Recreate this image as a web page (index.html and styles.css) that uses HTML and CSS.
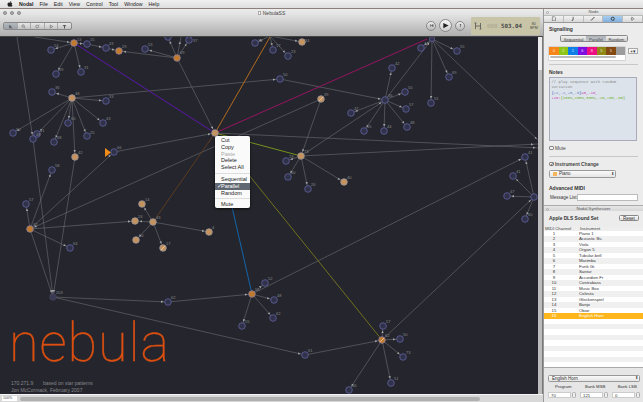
FILE: index.html
```html
<!DOCTYPE html>
<html lang="en">
<head>
<meta charset="utf-8">
<title>NebulaSS</title>
<link rel="stylesheet" href="styles.css">
</head>
<body>
<header class="menubar">
  <svg class="apple" viewBox="0 0 10 10"><path d="M5 3C6 2.2 8 2.2 8.8 3.6 7.4 4.6 7.6 6.6 9.2 7.2 8.6 8.800 7.600 9.800 6.800 9.600 6 9.400 5.600 9.200 5 9.200S3.800 9.600 3.200 9.600C2 9.600.6 7 .8 5.200 1 3 3.400 2.200 5 3ZM5 2.600C5 1.400 5.800.4 7 .2 7.200 1.400 6.200 2.600 5 2.600Z"/></svg>
  <b>Nodal</b><span>File</span><span>Edit</span><span>View</span><span>Control</span><span>Tool</span><span>Window</span><span>Help</span>
</header>
<div class="desk">
  <main class="window">
    <div class="toolbar">
      <div class="titlerow">
        <div class="lights"><i></i><i></i><i></i></div>
        <div class="doctitle"><i class="docicon"></i>NebulaSS</div>
      </div>
      <div class="toolrow">
        <div class="tools">
          <div class="tool on"><svg viewBox="0 0 8 8"><path d="M2 1v6l1.600-1.500L5 7.500l1-.5-1.200-2H6.800Z"/></svg></div>
          <div class="tool"><svg viewBox="0 0 8 8"><circle cx="3.400" cy="3.200" r="2" class="ol"/><path d="M5 5l2 2" class="ol"/></svg></div>
          <div class="tool"><svg viewBox="0 0 8 8"><circle cx="3.500" cy="4" r="2.300" class="ol"/><path d="M5.500 2.500l1.500-1.500" class="ol"/></svg></div>
          <div class="tool"><svg viewBox="0 0 8 8"><path d="M2 1.500L6 4 2 6.500Z" class="ol"/></svg></div>
          <div class="tool"><svg viewBox="0 0 8 8"><path d="M1 1.500h6L4.800 4v3H3.200V4Z"/></svg></div>
        </div>
        <div class="transport">
          <div class="tbtn"><svg viewBox="0 0 8 8"><path d="M1.500 1.500h1v5h-1ZM7 1.500v5L3 4Z"/></svg></div>
          <div class="tbtn play"><svg viewBox="0 0 8 8"><path d="M1.500 1v6L7.500 4Z"/></svg></div>
          <div class="tbtn"><svg viewBox="0 0 8 8"><path d="M2.500 1.500h3L4.500 3v3.500h-1V3Z"/></svg></div>
        </div>
        <div class="display">
          <svg class="dispicon" viewBox="0 0 8 8"><path d="M1.500 1v6M6.500 1v6M1.500 4h5M.5 1h2M5.500 7h2" class="ol"/></svg>
          <div class="time"><span class="dim">000.</span>503.04</div>
          <div class="bpm">80<br>BPM</div>
        </div>
      </div>
    </div>
    <div class="stage">
      <svg class="canvas" viewBox="0 37 538 357" width="538" height="357">
        <defs>
          <marker id="ag" viewBox="0 0 8 4" refX="7" refY="2" markerWidth="8" markerHeight="4" markerUnits="userSpaceOnUse" orient="auto"><path d="M0 .8L2.500 2 0 3.200Z" class="mg"/></marker>
        </defs>
        <g class="edges">
          <line x1="35" y1="37" x2="74" y2="43"/><line x1="74" y1="43" x2="87" y2="44"/><line x1="74" y1="43" x2="51" y2="50"/><line x1="74" y1="43" x2="56" y2="74"/><line x1="74" y1="43" x2="81" y2="72"/>
          <line x1="87" y1="44" x2="106" y2="48"/><line x1="106" y1="48" x2="119" y2="51"/><line x1="177" y1="58" x2="119" y2="51"/><line x1="177" y1="58" x2="145" y2="49"/><line x1="177" y1="58" x2="189" y2="40"/><line x1="177" y1="58" x2="168" y2="37"/><line x1="177" y1="58" x2="181" y2="37"/><line x1="177" y1="58" x2="215" y2="133"/>
          <line x1="72" y1="98" x2="52" y2="92"/><line x1="72" y1="98" x2="106" y2="101"/><line x1="72" y1="98" x2="68" y2="123"/><line x1="72" y1="98" x2="103" y2="123"/><line x1="72" y1="98" x2="13" y2="133"/><line x1="72" y1="98" x2="37" y2="134"/><line x1="72" y1="98" x2="87" y2="136"/><line x1="72" y1="98" x2="54" y2="142"/><line x1="72" y1="98" x2="75" y2="157"/><line x1="72" y1="98" x2="280" y2="79"/>
          <line x1="280" y1="79" x2="385" y2="100"/><line x1="385" y1="100" x2="392" y2="68"/><line x1="385" y1="100" x2="405" y2="92"/><line x1="385" y1="100" x2="406" y2="109"/><line x1="385" y1="100" x2="407" y2="127"/><line x1="385" y1="100" x2="351" y2="113"/><line x1="385" y1="100" x2="384" y2="131"/><line x1="385" y1="100" x2="364" y2="131"/><line x1="385" y1="100" x2="432" y2="39"/>
          <line x1="321" y1="99" x2="30" y2="229"/><line x1="321" y1="99" x2="301" y2="156"/><line x1="114" y1="152" x2="215" y2="133"/>
          <line x1="30" y1="229" x2="114" y2="152"/><line x1="30" y1="229" x2="26" y2="204"/><line x1="30" y1="229" x2="52" y2="170"/><line x1="30" y1="229" x2="70" y2="248"/><line x1="30" y1="229" x2="135" y2="221"/><line x1="30" y1="229" x2="53" y2="297"/>
          <line x1="17" y1="37" x2="33" y2="139"/><line x1="33" y1="139" x2="53" y2="297"/><line x1="75" y1="157" x2="53" y2="297"/>
          <line x1="53" y1="297" x2="168" y2="302"/><line x1="53" y1="297" x2="305" y2="355"/><line x1="168" y1="302" x2="252" y2="294"/>
          <line x1="252" y1="294" x2="265" y2="283"/><line x1="252" y1="294" x2="274" y2="300"/><line x1="252" y1="294" x2="273" y2="318"/><line x1="252" y1="294" x2="242" y2="326"/><line x1="252" y1="294" x2="525" y2="157"/>
          <line x1="305" y1="355" x2="382" y2="340"/><line x1="382" y1="340" x2="383" y2="326"/><line x1="382" y1="340" x2="400" y2="339"/><line x1="382" y1="340" x2="403" y2="357"/><line x1="382" y1="340" x2="391" y2="383"/><line x1="382" y1="340" x2="349" y2="390"/><line x1="382" y1="340" x2="534" y2="197"/>
          <line x1="534" y1="197" x2="525" y2="157"/><line x1="534" y1="197" x2="513" y2="176"/><line x1="534" y1="197" x2="507" y2="196"/><line x1="534" y1="197" x2="525" y2="219"/>
          <line x1="432" y1="39" x2="540" y2="142"/><line x1="432" y1="39" x2="457" y2="51"/><line x1="432" y1="39" x2="449" y2="77"/><line x1="432" y1="39" x2="431" y2="103"/><line x1="432" y1="39" x2="421" y2="48"/>
          <line x1="301" y1="156" x2="286" y2="161"/><line x1="301" y1="156" x2="288" y2="177"/><line x1="301" y1="156" x2="308" y2="189"/><line x1="301" y1="156" x2="344" y2="182"/><line x1="301" y1="156" x2="538" y2="144"/><line x1="301" y1="156" x2="385" y2="100"/>
          <line x1="215" y1="133" x2="540" y2="148"/>
          <line x1="153" y1="222" x2="135" y2="221"/><line x1="153" y1="222" x2="142" y2="204"/><line x1="153" y1="222" x2="136" y2="240"/><line x1="153" y1="222" x2="163" y2="248"/><line x1="153" y1="222" x2="209" y2="232"/>
          <line x1="270" y1="36" x2="255" y2="43"/><line x1="270" y1="36" x2="273" y2="50"/><line x1="270" y1="36" x2="288" y2="56"/><line x1="270" y1="36" x2="302" y2="42"/>
        </g>
        <line class="sig purple" x1="215" y1="133" x2="74" y2="43"/>
        <line class="sig magenta" x1="215" y1="133" x2="427" y2="39"/>
        <line class="sig amber" x1="215" y1="133" x2="270" y2="37"/>
        <line class="sig brown" x1="215" y1="133" x2="153" y2="222"/>
        <line class="sig green" x1="215" y1="133" x2="301" y2="156"/>
        <line class="sig blue" x1="215" y1="133" x2="252" y2="294"/>
        <line class="sig olive" x1="215" y1="133" x2="382" y2="340"/>
        <g class="nodes">
          <circle cx="87" cy="44" r="3.300"/><circle cx="51" cy="50" r="3.300"/><circle cx="106" cy="48" r="3.300"/><circle cx="145" cy="49" r="3.300"/><circle cx="189" cy="40" r="3.300"/><circle cx="168" cy="37" r="3.300"/><circle cx="56" cy="74" r="3.300"/><circle cx="81" cy="72" r="3.300"/><circle cx="52" cy="92" r="3.300"/><circle cx="106" cy="101" r="3.300"/><circle cx="68" cy="123" r="3.300"/><circle cx="103" cy="123" r="3.300"/><circle cx="13" cy="133" r="3.300"/><circle cx="37" cy="134" r="3.300"/><circle cx="87" cy="136" r="3.300"/><circle cx="33" cy="139" r="3.300"/><circle cx="54" cy="142" r="3.300"/><circle cx="114" cy="152" r="3.300"/><circle cx="52" cy="170" r="3.300"/><circle cx="26" cy="204" r="3.300"/><circle cx="70" cy="248" r="3.300"/><circle cx="255" cy="43" r="3.300"/><circle cx="273" cy="50" r="3.300"/><circle cx="288" cy="56" r="3.300"/><circle cx="280" cy="79" r="3.300"/><circle cx="392" cy="68" r="3.300"/><circle cx="405" cy="92" r="3.300"/><circle cx="406" cy="109" r="3.300"/><circle cx="407" cy="127" r="3.300"/><circle cx="351" cy="113" r="3.300"/><circle cx="364" cy="131" r="3.300"/><circle cx="384" cy="131" r="3.300"/><circle cx="421" cy="48" r="3.300"/><circle cx="457" cy="51" r="3.300"/><circle cx="449" cy="77" r="3.300"/><circle cx="431" cy="103" r="3.300"/><circle cx="525" cy="157" r="3.300"/><circle cx="513" cy="176" r="3.300"/><circle cx="507" cy="196" r="3.300"/><circle cx="525" cy="219" r="3.300"/><circle cx="286" cy="161" r="3.300"/><circle cx="288" cy="177" r="3.300"/><circle cx="308" cy="189" r="3.300"/><circle cx="168" cy="302" r="3.300"/><circle cx="265" cy="283" r="3.300"/><circle cx="274" cy="300" r="3.300"/><circle cx="273" cy="318" r="3.300"/><circle cx="242" cy="326" r="3.300"/><circle cx="305" cy="355" r="3.300"/><circle cx="383" cy="326" r="3.300"/><circle cx="400" cy="339" r="3.300"/><circle cx="403" cy="357" r="3.300"/><circle cx="391" cy="383" r="3.300"/><circle cx="349" cy="390" r="3.300"/><circle cx="385" cy="100" r="3.300"/><circle cx="534" cy="197" r="3.300"/><circle cx="432" cy="39" r="2.500"/>
          <circle class="dark" cx="53" cy="297" r="3.300"/>
        </g>
        <g class="nodes orange">
          <circle cx="74" cy="43" r="3.300"/><circle cx="177" cy="58" r="3.300"/><circle cx="30" cy="229" r="3.300"/><circle cx="252" cy="294" r="3.300"/><circle cx="382" cy="340" r="3.300"/><circle cx="119" cy="51" r="3.300"/>
        </g>
        <g class="nodes light">
          <circle cx="72" cy="98" r="3.300"/><circle cx="75" cy="157" r="3.300"/><circle cx="142" cy="204" r="3.300"/><circle cx="135" cy="221" r="3.300"/><circle cx="153" cy="222" r="3.300"/><circle cx="136" cy="240" r="3.300"/><circle cx="163" cy="248" r="3.300"/><circle cx="209" cy="232" r="3.300"/><circle cx="301" cy="156" r="3.300"/><circle cx="344" cy="182" r="3.300"/><circle cx="302" cy="42" r="3.300"/><circle cx="321" cy="99" r="3.300"/><circle cx="215" cy="133" r="3.300"/>
        </g>
        <path class="stripe" d="M161 250l4-4M380 342l4-4M319 101l4-4"/>
        <polygon class="cursor" points="105,148 111,152.500 105,157"/>
        <g class="labels">
          <text x="77" y="41">13</text><text x="90" y="41">15</text><text x="54" y="47">54</text><text x="109" y="45">43</text><text x="122" y="48">29</text><text x="148" y="46">53</text><text x="180" y="54">69</text><text x="193" y="42">37</text><text x="59" y="71">69</text><text x="84" y="69">31</text><text x="55" y="89">36</text><text x="75" y="95">48</text><text x="109" y="98">33</text><text x="71" y="120">60</text><text x="106" y="120">43</text><text x="16" y="131">50</text><text x="40" y="132">41</text><text x="90" y="134">25</text><text x="36" y="136">48</text><text x="57" y="139">68</text><text x="78" y="154">42</text><text x="117" y="149">66</text><text x="55" y="167">58</text><text x="29" y="201">57</text><text x="33" y="226">42</text><text x="73" y="245">64</text><text x="145" y="201">14</text><text x="138" y="218">24</text><text x="156" y="219">43</text><text x="139" y="237">60</text><text x="166" y="245">17</text><text x="212" y="229">4</text>
          <text x="258" y="42">18</text><text x="276" y="47">17</text><text x="291" y="53">23</text><text x="305" y="41.500">34</text><text x="283" y="76">50</text><text x="324" y="96">39</text><text x="395" y="65">42</text><text x="388" y="97">46</text><text x="408" y="89">50</text><text x="409" y="106">57</text><text x="410" y="124">48</text><text x="354" y="110">47</text><text x="367" y="128">55</text><text x="387" y="128">44</text><text x="424" y="45">47</text><text x="460" y="48">55</text><text x="452" y="74">69</text><text x="434" y="100">55</text>
          <text x="528" y="154">41</text><text x="516" y="173">41</text><text x="510" y="193">47</text><text x="528" y="216">60</text><text x="289" y="158">23</text><text x="291" y="174">60</text><text x="304" y="153">73</text><text x="311" y="186">26</text><text x="347" y="179">40</text>
          <text x="56" y="294">203</text><text x="171" y="299">62</text><text x="255" y="291">56</text><text x="268" y="280">52</text><text x="277" y="297">48</text><text x="276" y="315">62</text><text x="245" y="323">55</text><text x="308" y="352">61</text><text x="385" y="337">62</text><text x="386" y="323">57</text><text x="403" y="336">50</text><text x="406" y="354">73</text><text x="394" y="380">51</text><text x="352" y="387">46</text>
        </g>
        <text class="logo" x="9" y="361">nebula</text>
        <text class="credit" x="11" y="385">170.271.9</text>
        <text class="credit" x="43" y="385">based on star patterns</text>
        <text class="credit" x="11" y="391.500">Jon McCormack, February 2007</text>
      </svg>
      <div class="vscroll"><div class="vthumb"></div></div>
    </div>
    <div class="hbar">
      <div class="zoomfield">100%</div>
      <div class="hthumb"></div>
    </div>
    <nav class="ctxmenu">
      <div>Cut</div><div>Copy</div><div class="off">Paste</div><div>Delete</div><div>Select All</div>
      <hr>
      <div>Sequential</div><div class="sel"><span class="tick">✓</span>Parallel</div><div>Random</div>
      <hr>
      <div>Mute</div>
    </nav>
  </main>
  <aside class="panel">
    <div class="ptitle"><i></i>Node</div>
    <div class="tabs">
      <div class="tab"><svg viewBox="0 0 8 8"><path d="M2 1h3l1.500 1.500V7H2Z" class="ol"/></svg></div>
      <div class="tab"><svg viewBox="0 0 8 8"><path d="M5 1v4.500L3.500 7H2.500V5.800L4 5V1Z"/></svg></div>
      <div class="tab"><svg viewBox="0 0 8 8"><path d="M1.500 6.500L6.500 1.500" class="thick"/></svg></div>
      <div class="tab on"><svg viewBox="0 0 8 8"><circle cx="4" cy="4" r="2.300" class="thick"/></svg></div>
      <div class="tab"><svg viewBox="0 0 8 8"><path d="M2.500 1.500L6 4 2.500 6.500ZM1 4h1.500" class="ol"/></svg></div>
    </div>
    <section class="sec">
      <h2 class="h1st">Signalling</h2>
      <div class="seg"><div>Sequential</div><div class="on">Parallel</div><div>Random</div></div>
      <div class="swrow">
        <div class="swbox">
          <div class="swatches"><b class="s1">4</b><b class="s2">2</b><b class="s3">1</b><b class="s4">6</b><b class="s5">8</b><b class="s6">5</b><b class="s7">5</b><b class="s8"></b></div>
          <div class="swscroll"><div></div></div>
        </div>
        <div class="plus">+▾</div>
      </div>
      <hr class="rule r1">
      <h2 class="notes">Notes</h2>
      <div class="code"><span class="c-g">// play sequence with random<br>variation</span><br><span class="c-b">{</span><span class="c-t">+2,-2,+5,-5</span><span class="c-b">}</span><span class="c-m">=0,-10,</span><br><span class="c-m">+10:</span><span class="c-l">{100%,200%,300%,-10,+50,-60}</span></div>
      <label class="chk mute"><i></i>Mute</label>
      <hr class="rule r2">
      <label class="chk inst"><i class="on">✓</i><b>Instrument Change</b></label>
      <div class="popup small"><i class="piano"></i>Piano<span>⬍</span></div>
      <h2 class="adv">Advanced MIDI</h2>
      <div class="msg"><span>Message List:</span><div class="input"></div></div>
    </section>
    <div class="ptitle synth"><i></i>Nodal Synthesizer</div>
    <div class="dls"><b>Apple DLS Sound Set</b><div class="reset">Reset</div></div>
    <div class="thead"><span>MIDI Channel</span><span>Instrument</span></div>
    <div class="rows">
      <div><span>1</span><span>Piano 1</span></div><div><span>2</span><span>Acoustic Bs.</span></div><div><span>3</span><span>Viola</span></div><div><span>4</span><span>Organ 5</span></div><div><span>5</span><span>Tubular-bell</span></div><div><span>6</span><span>Marimba</span></div><div><span>7</span><span>Funk Gt.</span></div><div><span>8</span><span>Santur</span></div><div><span>9</span><span>Accordion Fr</span></div><div><span>10</span><span>Contrabass</span></div><div><span>11</span><span>Music Box</span></div><div><span>12</span><span>Celesta</span></div><div><span>13</span><span>Glockenspiel</span></div><div><span>14</span><span>Banjo</span></div><div><span>15</span><span>Oboe</span></div><div class="cur"><span>16</span><span>English Horn</span></div>
      <div></div><div></div><div></div><div></div><div></div><div></div><div></div><div></div><div></div>
    </div>
    <div class="foot">
      <div class="popup wide">English Horn<span>⬍</span></div>
      <div class="banks">
        <div class="bank"><label>Program</label><div class="fld"><div class="input">70</div><i class="step"></i></div></div>
        <div class="bank"><label>Bank MSB</label><div class="fld"><div class="input">121</div><i class="step"></i></div></div>
        <div class="bank"><label>Bank LSB</label><div class="fld"><div class="input">0</div><i class="step"></i></div></div>
      </div>
    </div>
  </aside>
</div>
</body>
</html>
```
FILE: styles.css
```css
* { box-sizing: border-box; }
html, body { margin: 0; padding: 0; }
body {
  width: 643px; height: 402px; overflow: hidden; position: relative;
  font-family: "Liberation Sans", Arial, sans-serif; font-size: 5px; color: #333; background: #e4e4e4;
}
.menubar {
  height: 9px; display: flex; align-items: center; gap: 6px; padding-left: 7px;
  background: linear-gradient(#f0f0f0, #dedede); border-bottom: 1px solid #8d807c;
  font-size: 5.200px; color: #222;
}
.apple { width: 6px; height: 6px; fill: #222; }
.desk { display: flex; height: 393px; }
.window { width: 543px; display: flex; flex-direction: column; }
.toolbar { height: 28px; background: linear-gradient(#ececec, #e0e0e0 25%, #aeaeae); border-bottom: 1px solid #444; flex: none; }
.titlerow { height: 8px; display: grid; grid-template-columns: 1fr auto 1fr; align-items: center; }
.lights { display: flex; gap: 3px; padding-left: 3px; }
.lights i { width: 4px; height: 4px; border-radius: 50%; background: #b4b4b8; border: .5px solid #888; }
.doctitle { display: flex; align-items: center; gap: 2px; color: #444; font-size: 5px; }
.docicon { width: 3px; height: 4px; background: #fff; border: .5px solid #aaa; }
.toolrow { display: flex; align-items: flex-start; height: 20px; }
.tools { display: flex; margin: 5px 0 0 3px; width: 69px; height: 8px; border: .5px solid #8a8a8a; border-radius: 2px; background: linear-gradient(#e8e8e8, #c2c2c2); }
.tool { flex: 1; display: flex; align-items: center; justify-content: center; border-right: .5px solid #a8a8a8; }
.tool:last-child { border: 0; }
.tool.on { background: linear-gradient(#b4bac0, #9aa0a8); }
.tool svg { width: 5px; height: 5px; fill: #555; }
.ol { fill: none; stroke: #555; stroke-width: .8; }
.thick { fill: none; stroke: #333; stroke-width: 1.300; }
.transport { display: flex; align-items: center; gap: 3px; margin: 3px 0 0 auto; height: 11px; }
.tbtn { width: 10px; height: 10px; border-radius: 50%; border: .5px solid #888; background: linear-gradient(#eee, #b8b8b8); display: flex; align-items: center; justify-content: center; }
.tbtn svg { width: 5px; height: 5px; fill: #555; }
.tbtn.play { width: 13px; height: 13px; background: linear-gradient(#f6f6f6, #cfcfcf); }
.tbtn.play svg { width: 7px; height: 7px; fill: #222; }
.display {
  width: 69px; height: 18px; margin: 0 3px 0 6px; background: #c8c4a8; border-radius: 1px;
  display: flex; align-items: center; padding-left: 3px; color: #444; flex: none;
}
.dispicon { width: 8px; height: 8px; }
.time { margin-left: 5px; font-family: "DejaVu Sans Mono", monospace; font-size: 5.800px; font-weight: bold; color: #444; white-space: nowrap; }
.time .dim { color: #a8a48c; font-weight: normal; }
.bpm { margin-left: 8px; font-size: 3.600px; line-height: 4px; text-align: center; }
.stage { flex: none; display: flex; height: 357px; }
.canvas { display: block; background: #25262d; flex: none; }
.vscroll { flex: 1; background: #ececec; padding-top: 33px; border-right: 1px solid #777; }
.vthumb { height: 100%; background: #bdbdbd; }
.hbar { flex: 1; display: flex; align-items: center; background: #d8d8d8; border-top: 1px solid #f4f4f4; padding-left: 2px; }
.zoomfield { width: 15px; height: 5px; background: #fff; font-size: 3.600px; line-height: 5px; padding-left: 1px; color: #444; }
.hthumb { width: 460px; height: 4px; margin-left: 3px; background: #b0b0b0; border-radius: 2px; }
.edges line { stroke: #6c6e74; stroke-width: .6; marker-end: url(#ag); }
.mg { fill: #a4a6ac; }
.sig { stroke-width: 1; }
.purple { stroke: #5a17a8; }
.magenta { stroke: #961460; }
.amber { stroke: #b06a1e; }
.brown { stroke: #5c3a1f; }
.green { stroke: #74921c; }
.blue { stroke: #1464aa; }
.olive { stroke: #70701e; }
.nodes circle { fill: #30324a; stroke: #62629e; stroke-width: .8; }
.nodes circle.dark { fill: #3a3b52; stroke: #4e4e70; stroke-dasharray: 1 .6; }
.nodes.orange circle { fill: #c27a2c; stroke: #8a7ea0; }
.nodes.light circle { fill: #c4935e; stroke: #98939c; }
.stripe { stroke: #f0d8c0; stroke-width: .7; fill: none; }
.cursor { fill: #ef8c17; }
.labels text { font-size: 4px; fill: #85868c; font-family: "Liberation Sans", sans-serif; }
.logo { font-family: Roboto, "Liberation Sans", sans-serif; font-weight: 100; font-size: 54px; fill: #dc4f10; stroke: #dc4f10; stroke-width: .35px; letter-spacing: .9px; }
.credit { font-size: 5px; fill: #85868c; font-family: "Liberation Sans", sans-serif; }
.ctxmenu {
  position: absolute; left: 215px; top: 136px; width: 35px; height: 72px; background: #fafafa;
  border-radius: 2px; box-shadow: 0 1px 3px rgba(0,0,0,.7); padding-top: 1px; font-size: 5.500px; color: #222;
}
.ctxmenu div { height: 6.800px; line-height: 6.800px; padding-left: 6px; position: relative; }
.ctxmenu hr { border: 0; border-top: .5px solid #ddd; margin: 2px 0; }
.ctxmenu .off { color: #aaa; }
.ctxmenu .sel { background: #5f6872; color: #fff; }
.tick { position: absolute; left: 1.500px; }
.panel { flex: 1; background: #ececec; border-left: 1px solid #999; display: flex; flex-direction: column; min-width: 0; }
.ptitle { height: 5.500px; line-height: 5.500px; text-align: center; font-size: 4.200px; color: #555; background: linear-gradient(#eee, #dcdcdc); position: relative; flex: none; }
.ptitle i { position: absolute; left: 2px; top: 1.500px; width: 3px; height: 3px; border-radius: 50%; border: .5px solid #aaa; }
.tabs { display: flex; height: 8px; background: linear-gradient(#f2f2f2, #d8d8d8); border-bottom: .5px solid #999; border-top: .5px solid #bbb; flex: none; }
.tab { flex: 1; display: flex; align-items: center; justify-content: center; border-right: .5px solid #bbb; }
.tab.on { background: linear-gradient(#a8cdf0, #7fb0de); }
.tab svg { width: 5.500px; height: 5.500px; fill: #333; }
.sec { padding: 0 5px; height: 182.500px; flex: none; }
.sec h2 { font-size: 5px; line-height: 6px; margin: 0; font-weight: bold; color: #333; }
.h1st { padding-top: 3.500px; height: 10px; }
.seg { display: flex; width: 68px; height: 7.500px; margin: 2px 0 0 11px; border: .5px solid #888; border-radius: 1.500px; background: linear-gradient(#f0f0f0, #d0d0d0); font-size: 4.200px; line-height: 7px; text-align: center; color: #444; }
.seg div { flex: 1 1 auto; padding: 0 2px; }
.seg .on { background: linear-gradient(#aeb4bb, #c2c6cc); }
.swrow { display: flex; gap: 3px; margin-top: 4.500px; height: 13px; }
.swbox { width: 78px; background: #fff; box-shadow: 0 0 0 .5px #bbb; }
.swatches { display: flex; height: 8px; }
.swatches b { flex: 1; text-align: center; line-height: 8px; font-size: 4px; font-weight: normal; color: #ffffffcc; }
.s1 { background: #f6861a; } .s2 { background: #8ec617; } .s3 { background: #0f7fe8; } .s4 { background: #7d10e0; }
.s5 { background: #ef0f85; } .s6 { background: #8f8a18; } .s7 { background: #854a12; } .s8 { background: #9c9c9c; }
.swscroll { padding: 1.500px 1px; }
.swscroll div { height: 2px; width: 66px; background: #bbb; border-radius: 1px; }
.plus { width: 10px; height: 6.500px; background: #f4f4f4; border: .5px solid #aaa; font-size: 4.500px; line-height: 5.500px; text-align: center; margin-top: 1px; }
.rule { border: 0; border-top: .5px solid #c8c8c8; margin: 0; }
.r1 { margin-top: 4.500px; }
.notes { margin-top: 3.500px !important; }
.code {
  margin-top: 2.500px; width: 88px; height: 64px; background: #dde3ea; border: .5px solid #aab;
  padding: 2px 1.500px; font-family: "Liberation Mono", monospace; font-size: 3.850px; line-height: 5.300px; color: #888; white-space: nowrap;
}
.c-g { color: #888; } .c-b { color: #2a55c8; } .c-t { color: #5f7fc8; } .c-m { color: #d040b8; } .c-l { color: #6cb02c; }
.chk { display: flex; align-items: center; gap: 1.500px; height: 6px; font-size: 4.800px; color: #444; }
.chk i { width: 4.500px; height: 4.500px; background: #f4f4f4; border: .5px solid #888; border-radius: 1px; font-size: 5px; line-height: 3.500px; font-style: normal; color: #222; }
.mute { margin-top: 4px; }
.r2 { margin-top: 4.500px; }
.inst { margin-top: 4.500px; }
.inst b { font-size: 4.800px; }
.popup { display: flex; align-items: center; background: linear-gradient(#fafafa, #e4e4e4); border: .5px solid #999; border-radius: 1.500px; font-size: 4.500px; padding: 0 1.500px 0 3px; }
.popup span { margin-left: auto; font-size: 3.500px; }
.popup.small { width: 67px; height: 7.500px; margin-top: 3px; }
.piano { width: 3.500px; height: 3.500px; background: #f8b45a; margin-right: 2.500px; }
.adv { margin-top: 7.500px !important; }
.msg { display: flex; align-items: center; margin-top: 3px; height: 7px; font-size: 4.500px; white-space: nowrap; }
.msg span { margin-left: 1px; width: 27px; flex: none; }
.msg .input { flex: 1; height: 7px; background: #fff; border: .5px solid #bbb; }
.synth { border-top: .5px solid #aaa; background: linear-gradient(#e6e6e6, #d6d6d6); }
.dls { display: flex; align-items: center; justify-content: space-between; height: 16px; padding: 4.500px 4px 5.500px 5px; font-size: 4.800px; flex: none; color: #333; }
.reset { width: 20px; height: 6.500px; background: linear-gradient(#fafafa, #dcdcdc); border: .5px solid #888; border-radius: 1.500px; text-align: center; line-height: 5.500px; font-size: 4.500px; }
.thead { display: grid; grid-template-columns: 35px 1fr; height: 4.500px; line-height: 4.500px; font-size: 4.300px; background: #eee; color: #444; flex: none; padding-left: 1px; }
.rows { flex: none; height: 136px; background: #fff; overflow: hidden; }
.rows div { display: grid; grid-template-columns: 35px 1fr; height: 5.470px; line-height: 5.470px; font-size: 4.300px; color: #333; }
.rows div:nth-child(even) { background: #f0f0f0; }
.rows span:first-child { text-align: center; padding-right: 15px; }
.rows .cur, .rows .cur:nth-child(even) { background: #fdb71c; color: #fff; }
.foot { flex: 1; background: #e6e6e6; border-top: .5px solid #aaa; padding: 7px 3px 0 4px; }
.popup.wide { height: 6.500px; }
.banks { display: flex; margin-top: 2.500px; gap: 4.500px; }
.bank { width: 27.500px; font-size: 4.300px; text-align: center; }
.bank label { display: block; height: 6px; line-height: 6px; padding-left: 3px; white-space: nowrap; }
.fld { display: flex; gap: 1px; margin-top: 2px; }
.fld .input { flex: 1; height: 6px; background: #fff; border: .5px solid #ccc; text-align: left; line-height: 5px; padding-left: 2px; }
.step { width: 4px; height: 6px; background: #f0f0f0; border: .5px solid #aaa; border-radius: 1.500px; }
```
